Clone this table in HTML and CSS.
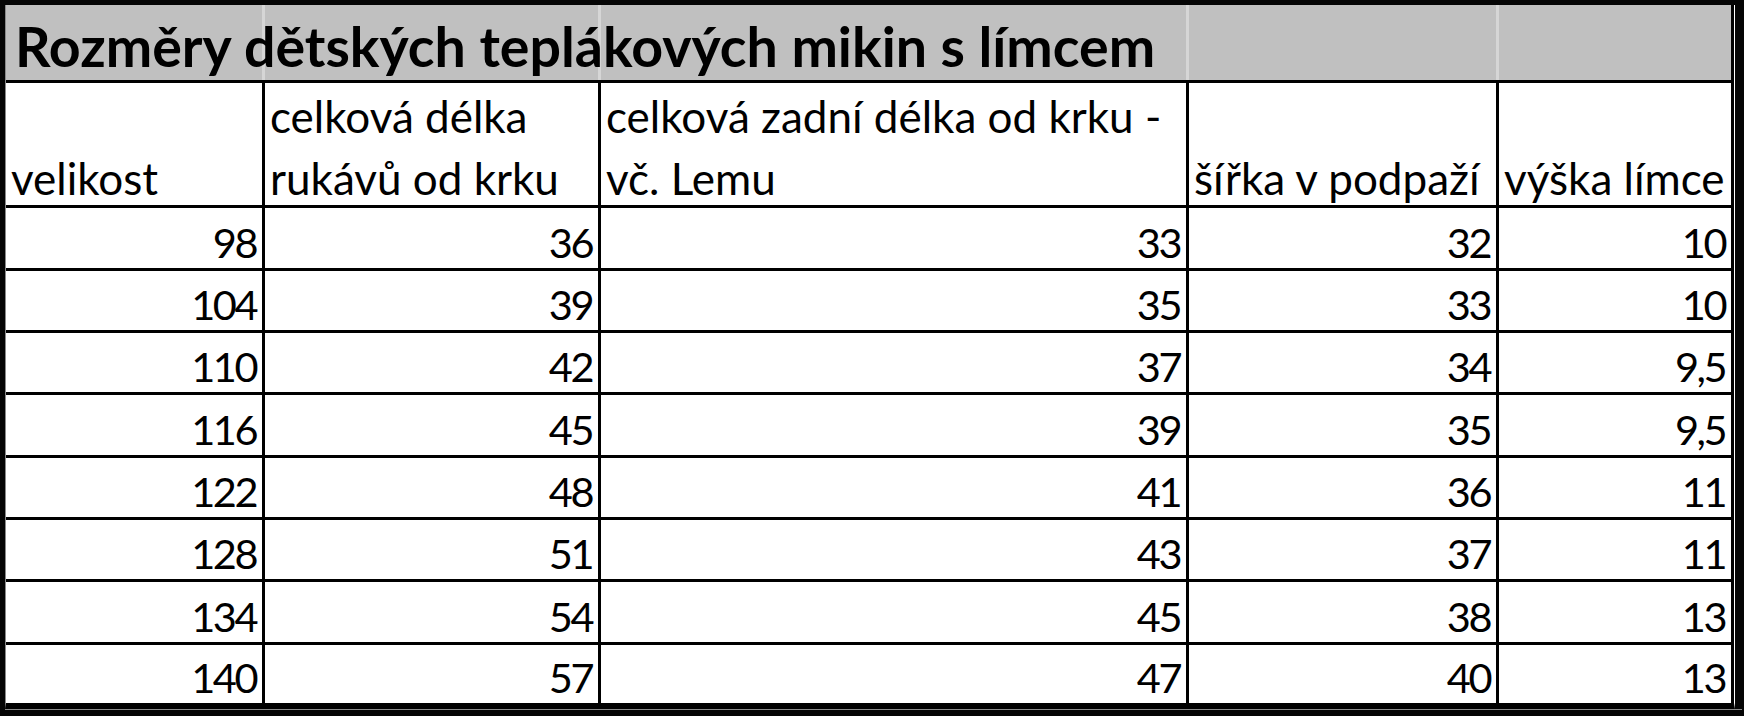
FILE: index.html
```html
<!DOCTYPE html>
<html lang="cs">
<head>
<meta charset="utf-8">
<title>Rozměry dětských teplákových mikin s límcem</title>
<link rel="stylesheet" href="styles.css">
</head>
<body>
<div class="frame">
  <div class="sheet">
    <div class="title-row">
      <div class="tcell first"><span class="title">Rozměry dětských teplákových mikin s límcem</span></div>
      <div class="tcell"></div>
      <div class="tcell"></div>
      <div class="tcell"></div>
      <div class="tcell"></div>
    </div>

    <div class="cell head"><span>velikost</span></div>
    <div class="cell head"><span>celková délka<br>rukávů od krku</span></div>
    <div class="cell head"><span>celková zadní délka od krku -<br>vč. Lemu</span></div>
    <div class="cell head"><span>šířka v podpaží</span></div>
    <div class="cell head"><span>výška límce</span></div>

    <div class="cell num">98</div><div class="cell num">36</div><div class="cell num">33</div><div class="cell num">32</div><div class="cell num">10</div>
    <div class="cell num">104</div><div class="cell num">39</div><div class="cell num">35</div><div class="cell num">33</div><div class="cell num">10</div>
    <div class="cell num">110</div><div class="cell num">42</div><div class="cell num">37</div><div class="cell num">34</div><div class="cell num">9,5</div>
    <div class="cell num">116</div><div class="cell num">45</div><div class="cell num">39</div><div class="cell num">35</div><div class="cell num">9,5</div>
    <div class="cell num">122</div><div class="cell num">48</div><div class="cell num">41</div><div class="cell num">36</div><div class="cell num">11</div>
    <div class="cell num">128</div><div class="cell num">51</div><div class="cell num">43</div><div class="cell num">37</div><div class="cell num">11</div>
    <div class="cell num">134</div><div class="cell num">54</div><div class="cell num">45</div><div class="cell num">38</div><div class="cell num">13</div>
    <div class="cell num">140</div><div class="cell num">57</div><div class="cell num">47</div><div class="cell num">40</div><div class="cell num">13</div>
  </div>
</div>
</body>
</html>
```

FILE: styles.css
```css
html, body {
  margin: 0;
  padding: 0;
  background: #050505;
}

.frame {
  width: 1744px;
  height: 716px;
  box-sizing: border-box;
  padding: 5px 0 0 5px;
  background: #050505;
}

.sheet {
  width: 1730px;
  box-sizing: border-box;
  display: grid;
  grid-template-columns: 256px 333px 585px 307px 232px;
  grid-template-rows: 75px 122px 60px 59px 59px 60px 59px 59px 60px 58px;
  gap: 3px;
  background: #000;
  border-left: 1px solid #8a8a8a;
  padding-right: 3px;
  border-right: 1px solid #ffffff;
  border-bottom: 6px solid #000;
  box-shadow: 0 1px 0 #8a8a8a, 7px 0 0 #050505, 7px 1px 0 #8a8a8a;
  font-family: Lato, "Open Sans", "Liberation Sans", sans-serif;
  color: #000;
}

.title-row {
  grid-column: 1 / -1;
  display: grid;
  grid-template-columns: 256px 333px 585px 307px 232px;
  column-gap: 3px;
  background: #d6d6d6;
}

.tcell {
  background: #c0c0c0;
}

.tcell.first {
  display: flex;
  align-items: flex-end;
  padding-left: 9px;
  white-space: nowrap;
}

.title {
  position: relative;
  z-index: 1;
  font-weight: 700;
  font-size: 55.5px;
  line-height: 1.2;
}

.cell {
  background: #fff;
  display: flex;
  align-items: flex-end;
  line-height: 1.2;
  box-sizing: border-box;
}

.cell.head {
  padding-left: 5px;
  font-size: 44px;
}

.cell.head span {
  line-height: 62px;
  margin-bottom: -4px;
  white-space: nowrap;
}

.cell.num {
  justify-content: flex-end;
  padding-right: 6px;
  padding-bottom: 0;
  font-size: 41.5px;
  letter-spacing: -2.5px;
}
```
